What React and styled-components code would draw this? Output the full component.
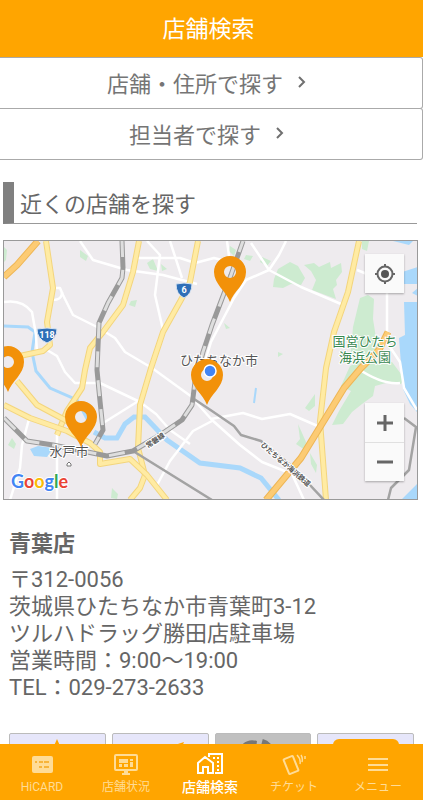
import React from "react";
import styled, { createGlobalStyle } from "styled-components";

const GlobalStyle = createGlobalStyle`
  * {
    box-sizing: border-box;
  }
  body {
    margin: 0;
    background: #fff;
    color: #666;
    font-family: Roboto, "Noto Sans CJK JP", sans-serif;
  }
`;

const tiles = [
  { id: "favorite", label: "お気に入り", color: "#e6e6fa" },
  { id: "route", label: "ルート", color: "#e6e6fa" },
  { id: "call", label: "電話", color: "#c0c0c0" },
  { id: "reserve", label: "予約", color: "#e6e6fa" },
];

const tabs = [
  { label: "HiCARD", icon: CardIcon },
  { label: "店舗状況", icon: MonitorIcon },
  { label: "店舗検索", icon: ShopIcon, active: true },
  { label: "チケット", icon: TicketIcon },
  { label: "メニュー", icon: MenuIcon },
];

const whiteRoads = [
  "M80 241L93 260L127 270L163 275L197 284",
  "M147 241L160 255L155 295L163 330",
  "M138 258H180L195 263L214 258L230 262",
  "M170 241L182 278",
  "M52 288H60L63 295L73 315L97 327L115 338L125 352L152 368L192 397",
  "M52 300C60 300 62 297 62 292",
  "M4 302Q22 299 32 312L36 335L37 354",
  "M47 350L57 356L65 372L75 383H100L140 402L156 414L170 430L190 444",
  "M100 425L140 400",
  "M29 419L22 445L20 468L10 500",
  "M57 435V500",
  "M212 421L193 431L170 461L157 485",
  "M196 402L212 420L240 445L262 462L292 474L304 500",
  "M211 419L243 413L262 419L290 414L320 427",
  "M251 243L269 270L301 287L341 304",
  "M286 241L279 255L269 270L246 280L234 298L211 342L204 365",
  "M227 241L229 256",
  "M357 270L387 282V340L380 352",
  "M384 338L400 362L404 388L417 410",
  "M357 368Q382 385 400 383",
];

const yellowRoads = [
  "M46 241L53 288L47 322L50 345L43 351L15 357",
  "M139 241L133 272L123 305L103 332L90 348L85 370L82 388L67 411L57 435",
  "M198 241L190 282L182 298L163 332L151 368L140 405L138 448L145 475L140 488L130 500",
  "M4 405L30 418L67 431L90 443L100 452V464L130 459L147 475L167 500",
  "M17 381L37 405L67 421L80 432",
  "M359 241L348 292L334 332L326 368L320 421L326 500",
];

const orangeRoads = [
  "M38 241L17 265L4 277",
  "M266 500L301 458L344 388L361 368L379 350L388 332",
];

const railways = [
  "M122 241L123 268L122 278L108 303L99 323L97 370L100 401L103 430L95 444",
  "M4 418L27 441L53 445L107 456L133 451L160 435L182 420L192 405L195 382L203 352L212 325L231 275L243 241",
];

const pins = [
  [230, 302],
  [207, 405],
  [81, 447],
  [8, 392],
];

function App() {
  return (
    <>
      <GlobalStyle />
      <Screen>
        <Header>
          <Title>店舗検索</Title>
        </Header>
        <Content>
          <SearchButton type="button">
            店舗・住所で探す <Chevron />
          </SearchButton>
          <SearchButton type="button">
            担当者で探す <Chevron />
          </SearchButton>
          <SectionTitle>近くの店舗を探す</SectionTitle>
          <MapFrame>
            <MapDrawing />
            <LocateButton type="button" aria-label="現在地">
              <svg width="24" height="24" viewBox="0 0 24 24" fill="none" stroke="#666" strokeWidth="2">
                <circle cx="12" cy="12" r="7.5" />
                <circle cx="12" cy="12" r="4" fill="#555" stroke="none" />
                <path d="M12 2v3M12 19v3M2 12h3M19 12h3" />
              </svg>
            </LocateButton>
            <ZoomControls>
              <MapButton type="button" aria-label="拡大">
                <svg width="18" height="18" viewBox="0 0 18 18" stroke="#666" strokeWidth="3">
                  <path d="M9 1v16M1 9h16" />
                </svg>
              </MapButton>
              <MapButton type="button" aria-label="縮小">
                <svg width="18" height="18" viewBox="0 0 18 18" stroke="#666" strokeWidth="3">
                  <path d="M1 9h16" />
                </svg>
              </MapButton>
            </ZoomControls>
          </MapFrame>
          <Shop>
            <ShopName>青葉店</ShopName>
            <Address>
              〒312-0056
              <br />
              茨城県ひたちなか市青葉町3-12
              <br />
              ツルハドラッグ勝田店駐車場
              <br />
              営業時間：9:00～19:00
              <br />
              TEL：029-273-2633
            </Address>
          </Shop>
          <Tiles>
            {tiles.map((tile) => (
              <Tile key={tile.id} type="button" aria-label={tile.label} $color={tile.color}>
                <TileIcon id={tile.id} />
              </Tile>
            ))}
          </Tiles>
        </Content>
        <TabBar>
          {tabs.map(({ label, icon: Icon, active }) => (
            <Tab key={label} href="#" $active={active} aria-current={active ? "page" : undefined}>
              <Icon />
              <TabLabel $active={active}>{label}</TabLabel>
            </Tab>
          ))}
        </TabBar>
      </Screen>
    </>
  );
}

function Chevron() {
  return (
    <svg width="10" height="14" viewBox="0 0 10 14" fill="none" stroke="#707070" strokeWidth="2">
      <path d="M2 2l5 5-5 5" />
    </svg>
  );
}

function MapDrawing() {
  return (
    <MapSvg viewBox="4 241 413 258" preserveAspectRatio="xMidYMid slice" role="img" aria-label="店舗の地図">
      <rect x="4" y="241" width="413" height="259" fill="#eeebee" />

      {/* parks */}
      <g fill="#cdebd0">
        <path d="M80 250l8 6-2 5-6-4zM147 263l6-4 5 12-8-2zM161 264l6 5-5 2zM131 301l6-1-2 7-6-2zM4 247l3 3-1 10-2 2z" />
        <path d="M246 255l7 1-3 5-6-2zM230 246l6 4-2 6-5-5zM262 257l9 4-4 5-7-4z" />
        <path d="M274 279l4-10 12-7 8 4 7 12-4 7-10-1-8 4-10-1z" />
        <path d="M304 265l10-2 5 4 11-5 1 6 10-5 1 9-6 8 1 5-4 4 3 10-24-9 4-10-5-9z" />
        <path d="M362 241h7l-2 10-5-2zM360 298l8-3 6 4-1 20 4 25-3 20-24-3 3-34z" />
        <path d="M350 366l12-6 30 2 12 16-3 6-15-1-11 3-2 10-11 8-10 8-9 12-11 1 7-14 12-20-10-5z" />
        <path d="M315 394v12l-6 5-4-3zM298 424l8 18-1 8-9-6 4-5zM310 453l7 12-1 8-5-9zM12 438l4 6-2 5-6-4zM112 488l6 6-1 5-6-1zM224 323l6 5-4 1zM278 352l5 2-5 3z" />
      </g>

      {/* water */}
      <g fill="#a9d8fb">
        <path d="M404 302h14v111l-8-9-7-15-2-25-2-26 6-3zM396 274l22-7v17h-19zM393 241h20l-4 4zM418 288l-6 5 6 3zM401 500l16-16v16zM30 449l8-3 15 2-6 9-13-1z" />
      </g>
      <g fill="none" stroke="#a9d8fb">
        <path strokeWidth="3" d="M4 326L28 327L35 332L32 352L36 371L50 388L77 400L92 428" />
        <path strokeWidth="5" d="M94 432L105 438L117 438L125 424L134 417L145 417L167 440L200 463L240 468L261 478L279 500" />
        <path strokeWidth="2" d="M256 388L254 403" />
      </g>

      <g fill="none" strokeLinejoin="round">
        {whiteRoads.map((d) => (
          <path key={d} d={d} stroke="#fff" strokeWidth="2.5" />
        ))}
        {yellowRoads.map((d) => (
          <React.Fragment key={d}>
            <path d={d} stroke="#f3d57d" strokeWidth="6" />
            <path d={d} stroke="#ffeba3" strokeWidth="4" />
          </React.Fragment>
        ))}
        {orangeRoads.map((d) => (
          <React.Fragment key={d}>
            <path d={d} stroke="#eeb655" strokeWidth="7" />
            <path d={d} stroke="#fccb74" strokeWidth="5" />
          </React.Fragment>
        ))}
        <path
          stroke="#a3a3a3"
          strokeWidth="2.5"
          d="M133 451L212 500M194 399L212 411L234 426L241 435L261 441L294 468L324 500M404 418L416 427L409 470L391 488L388 500"
        />
        {railways.map((d) => (
          <React.Fragment key={d}>
            <path d={d} stroke="#999" strokeWidth="5" />
            <path d={d} stroke="#dedede" strokeWidth="3" strokeDasharray="16 13" />
          </React.Fragment>
        ))}
      </g>

      <Shield x={184} y={290} text="6" half={8} />
      <Shield x={47} y={335} text="118" half={10} />

      <MapText x="219" y="365" size="13">ひたちなか市</MapText>
      <MapText x="69" y="456" size="13">水戸市</MapText>
      <MapText x="365" y="346" size="13" color="#37874f">国営ひたち</MapText>
      <MapText x="365" y="362" size="13" color="#37874f">海浜公園</MapText>
      <MapText x="155" y="443" size="7" weight="700" transform="rotate(-34 155 440)">常磐線</MapText>
      <MapText x="286" y="467" size="7" weight="700" transform="rotate(41 286 464)">ひたちなか海浜鉄道</MapText>
      <path d="M67 466v-2l2-2 2 2v2z" fill="#fff" stroke="#777" />

      {pins.map(([x, y]) => (
        <g key={x} transform={`translate(${x} ${y})`}>
          <path
            fill="#f29109"
            fillRule="evenodd"
            d="M0 0C-4-11-16-18-16-30A16 16 0 0 1 16-30C16-18 4-11 0 0ZM0-36A6 6 0 1 0 0-24A6 6 0 1 0 0-36Z"
          />
        </g>
      ))}
      <circle cx="210" cy="371" r="6" fill="#4285f4" stroke="#fff" strokeWidth="1.5" />

      <Logo x="11" y="488">
        <tspan fill="#4285f4">G</tspan>
        <tspan fill="#ea4335">o</tspan>
        <tspan fill="#fbbc05">o</tspan>
        <tspan fill="#4285f4">g</tspan>
        <tspan fill="#34a853">l</tspan>
        <tspan fill="#ea4335">e</tspan>
      </Logo>
    </MapSvg>
  );
}

function Shield({ x, y, text, half }) {
  return (
    <g transform={`translate(${x} ${y})`}>
      <path
        d={`M${-half}-6Q0-8 ${half}-6Q${half} 4 0 8Q${-half} 4 ${-half}-6Z`}
        fill="#2f6fb7"
        stroke="#dbe6f2"
      />
      <ShieldText y="3">{text}</ShieldText>
    </g>
  );
}

function TileIcon({ id }) {
  if (id === "favorite") {
    return (
      <svg width="48" height="46" viewBox="0 0 48 46" fill="#ffa500">
        <path d="M24 0l7 16 17 2-13 11 4 17-15-9-15 9 4-17L0 18l17-2z" />
      </svg>
    );
  }
  if (id === "route") {
    return (
      <svg width="48" height="46" viewBox="0 0 48 46" fill="#ffa500">
        <path d="M48 3L30 46 22 26 2 18z" />
      </svg>
    );
  }
  if (id === "call") {
    return (
      <svg width="66" height="46" viewBox="0 0 66 46">
        <path d="M10 8Q17-1 27 2L25 18Q30 30 42 35L50 46H30Q12 30 10 8Z" fill="#777" />
        <path d="M32 3Q43 6 47 26" fill="none" stroke="#777" strokeWidth="6" />
      </svg>
    );
  }
  return (
    <svg width="66" height="46" viewBox="0 0 66 46" fill="#ffa500">
      <rect width="66" height="46" rx="6" />
    </svg>
  );
}

function CardIcon() {
  return (
    <svg width="24" height="24" viewBox="0 0 24 24">
      <rect x="2" y="4" width="21" height="17" rx="2" fill="currentColor" />
      <path d="M5 10h2M9 10h4M14 10h5M9 15h3M14 15h5" stroke="#f5a71c" strokeWidth="1.5" />
    </svg>
  );
}

function MonitorIcon() {
  return (
    <svg width="24" height="24" viewBox="0 0 24 24" fill="none" stroke="currentColor" strokeWidth="2">
      <rect x="1" y="3" width="22" height="15" rx="1" />
      <path d="M8 22h8" strokeWidth="2" />
      <path d="M12 18v4" strokeWidth="4" />
      <path d="M5 7h9v4H5zM16 7h3v2h-3zM16 10h3v5h-3zM5 12h3v3H5zM10 12h4v3h-4z" fill="currentColor" stroke="none" />
    </svg>
  );
}

function ShopIcon() {
  return (
    <svg width="28" height="24" viewBox="0 0 28 24" fill="none" stroke="currentColor" strokeWidth="2">
      <path d="M2 11v10h5v-6h5v6h5V11L9 5z" />
      <path d="M13 5V2h13v19h-7" />
      <path d="M17 6h2M21 6h2M21 10h2M21 14h2M21 18h2" />
    </svg>
  );
}

function TicketIcon() {
  return (
    <svg width="24" height="24" viewBox="0 0 24 24" fill="none" stroke="currentColor" strokeWidth="2">
      <rect x="4" y="5" width="10" height="16" rx="1" transform="rotate(-22 9 13)" />
      <path d="M15 3q4 4 3 9M19 3q2 3 1 7M23 4v3" strokeWidth="1.5" />
    </svg>
  );
}

function MenuIcon() {
  return (
    <svg width="24" height="24" viewBox="0 0 24 24" fill="none" stroke="currentColor" strokeWidth="2">
      <path d="M2 7h20M2 13h20M2 18h20" />
    </svg>
  );
}

const Screen = styled.div`
  display: flex;
  flex-direction: column;
  height: 100vh;
`;

const Header = styled.header`
  display: flex;
  flex: none;
  align-items: center;
  justify-content: center;
  height: 57px;
  padding: 2px 6px 0 0;
  background: #ffa500;
`;

const Title = styled.h1`
  margin: 0;
  color: #fff;
  font-size: 23px;
  font-weight: 400;
  line-height: 32px;
`;

const Content = styled.main`
  flex: 1;
  min-height: 0;
  overflow-y: auto;
  scrollbar-width: none;
`;

const SearchButton = styled.button`
  display: flex;
  align-items: center;
  justify-content: center;
  gap: 14px;
  width: 100%;
  height: 52px;
  padding: 0 8px 2px 0;
  border: 1px solid #aaa;
  border-left: 0;
  border-radius: 0 3px 3px 0;
  background: #fff;
  color: #757575;
  font-family: inherit;
  font-size: 22px;

  & + & {
    margin-top: -1px;
  }
`;

const SectionTitle = styled.h2`
  margin: 22px 6px 16px 3px;
  padding: 7px 0 2px 6px;
  border-left: 11px solid #808080;
  border-bottom: 1px solid #999;
  color: #666;
  font-size: 22px;
  font-weight: 400;
  line-height: 32px;
`;

const MapFrame = styled.section`
  position: relative;
  height: 260px;
  margin: 0 5px 0 3px;
  border: 1px solid #999;
  overflow: hidden;
`;

const MapSvg = styled.svg`
  display: block;
  width: 100%;
  height: 100%;
`;

const MapText = styled.text`
  fill: ${(props) => props.color || "#555"};
  stroke: #fff;
  stroke-width: 2px;
  paint-order: stroke;
  font-family: Roboto, "Noto Sans CJK JP", sans-serif;
  font-size: ${(props) => props.size}px;
  font-weight: ${(props) => props.weight || 400};
  text-anchor: middle;
`;

const ShieldText = styled.text`
  fill: #fff;
  font-size: 9px;
  font-weight: 700;
  text-anchor: middle;
`;

const Logo = styled.text`
  stroke: #fff;
  stroke-width: 2px;
  paint-order: stroke;
  font-family: Lato, sans-serif;
  font-size: 18px;
  font-weight: 700;
`;

const MapButton = styled.button`
  display: flex;
  align-items: center;
  justify-content: center;
  width: 39px;
  height: 39px;
  padding: 0;
  border: 0;
  background: #fafafa;

  & + & {
    border-top: 1px solid #e0e0e0;
  }
`;

const LocateButton = styled(MapButton)`
  position: absolute;
  top: 13px;
  right: 13px;
  box-shadow: 0 1px 2px rgba(0, 0, 0, 0.3);
`;

const ZoomControls = styled.div`
  position: absolute;
  right: 13px;
  bottom: 18px;
  box-shadow: 0 1px 2px rgba(0, 0, 0, 0.3);
`;

const Shop = styled.section`
  padding: 28px 9px 0;
`;

const ShopName = styled.h3`
  margin: 0 0 6px;
  font-size: 22px;
  font-weight: 700;
  line-height: 32px;
`;

const Address = styled.p`
  margin: 0;
  font-size: 22px;
  line-height: 27px;
`;

const Tiles = styled.div`
  display: grid;
  grid-template-columns: repeat(4, 1fr);
  gap: 6px;
  padding: 32px 9px 12px;
`;

const Tile = styled.button`
  display: flex;
  justify-content: center;
  height: 64px;
  padding: 5px 0 0;
  border: 1px solid #bbb;
  border-radius: 2px;
  background: ${(props) => props.$color};
`;

const TabBar = styled.nav`
  display: grid;
  flex: none;
  grid-template-columns: repeat(5, 1fr);
  height: 56px;
  padding-right: 3px;
  background: #ffa500;
`;

const Tab = styled.a`
  display: flex;
  flex-direction: column;
  align-items: center;
  padding-top: 8px;
  color: ${(props) => (props.$active ? "#fff" : "#ffdc96")};
  text-decoration: none;
`;

const TabLabel = styled.span`
  font-size: ${(props) => (props.$active ? "14px" : "12px")};
  font-weight: ${(props) => (props.$active ? 500 : 400)};
  line-height: 22px;
`;

export default App;
